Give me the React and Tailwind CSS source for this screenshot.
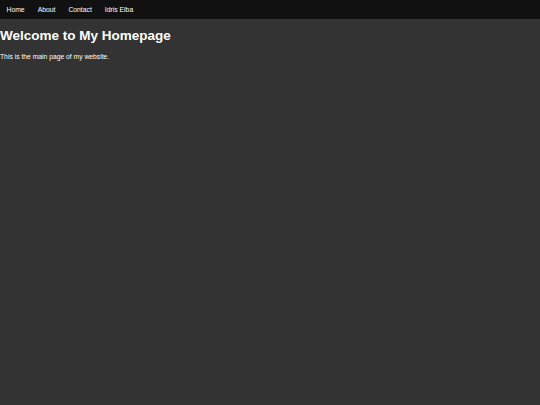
export default function App() {
  const links = ['Home', 'About', 'Contact', 'Idris Elba'];
  return (
    <div className="min-h-[405px] bg-[#333333] text-white" style={{ fontFamily: '"Liberation Sans", Arial, sans-serif' }}>
      <nav className="flex bg-[#111111] h-[19px]">
        {links.map((l) => (
          <a key={l} href="#" className="px-[6.5px] text-[6.8px] leading-[19px] text-white">
            {l}
          </a>
        ))}
      </nav>
      <h1 className="mt-[9px] text-[13.5px] font-bold leading-[16px]">Welcome to My Homepage</h1>
      <p className="mt-[9px] text-[6.75px] leading-[8px]">This is the main page of my website.</p>
    </div>
  );
}
